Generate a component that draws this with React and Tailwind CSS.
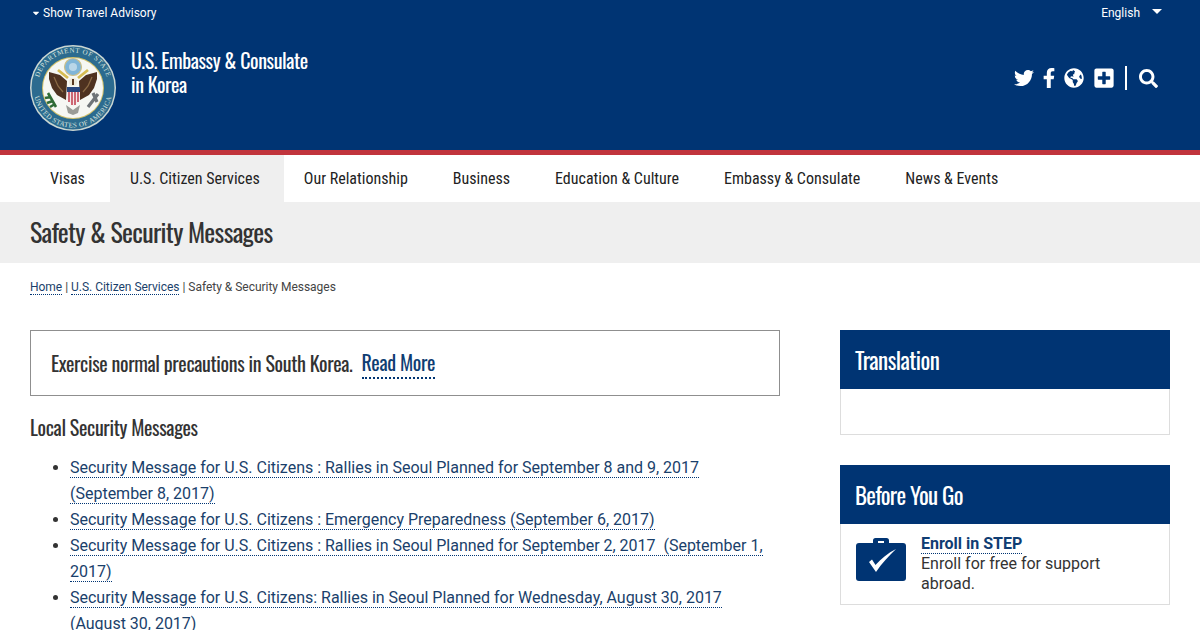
import { FaCaretDown, FaTwitter, FaFacebookF, FaGlobeAmericas, FaPlusSquare, FaSearch } from "react-icons/fa";

const navItems = ["Visas", "U.S. Citizen Services", "Our Relationship", "Business", "Education & Culture", "Embassy & Consulate", "News & Events"];

const messages = [
  "Security Message for U.S. Citizens : Rallies in Seoul Planned for September 8 and 9, 2017 (September 8, 2017)",
  "Security Message for U.S. Citizens : Emergency Preparedness (September 6, 2017)",
  "Security Message for U.S. Citizens : Rallies in Seoul Planned for September 2, 2017\u00a0 (September 1, 2017)",
  "Security Message for U.S. Citizens: Rallies in Seoul Planned for Wednesday, August 30, 2017 (August 30, 2017)",
];

const heading = "font-['Liberation_Sans_Narrow','Oswald',sans-serif]";

function Seal() {
  return (
    <svg width="86" height="86" viewBox="0 0 86 86">
      <defs>
        <path id="sealTop" d="M7.500 43a35.500 35.500 0 0 1 71 0" />
        <path id="sealBottom" d="M3.500 43a39.500 39.500 0 0 0 79 0" />
      </defs>
      <circle cx="43" cy="43" r="43" fill="#c9d6d2" />
      <circle cx="43" cy="43" r="41.500" fill="#2c6b8f" />
      <circle cx="43" cy="43" r="31" fill="#d3c169" />
      <circle cx="43" cy="43" r="30" fill="#f6f7f3" />
      <text fill="#dbe5df" fontSize="7" letterSpacing="0.6" fontFamily="Liberation Serif, serif">
        <textPath href="#sealTop" startOffset="50%" textAnchor="middle">DEPARTMENT OF STATE</textPath>
      </text>
      <text fill="#dbe5df" fontSize="7" letterSpacing="0.4" fontFamily="Liberation Serif, serif">
        <textPath href="#sealBottom" startOffset="50%" textAnchor="middle">UNITED STATES OF AMERICA</textPath>
      </text>
      <circle cx="43" cy="22" r="8.500" fill="#7fb5d8" stroke="#cdbf88" strokeWidth="1.200" />
      <circle cx="43" cy="22" r="4" fill="#b9d6e8" />
      <path d="M37 36 30 30 19 27l0 7 3 9 5 7 9 5ZM49 36l7-6 11-3v7l-3 9-5 7-9 5Z" fill="#4e3220" />
      <path d="M24 32l4 9 5 6M62 32l-4 9-5 6" stroke="#8a6a45" strokeWidth="1.300" fill="none" />
      <path d="M28 25l10 8M58 25 48 33" stroke="#d6bc52" strokeWidth="2.800" />
      <circle cx="43" cy="37" r="4" fill="#efeadb" />
      <path d="M43 34v6" stroke="#5a3a22" strokeWidth="2" />
      <path d="M37 42h13v13l-6.500 6-6.500-6Z" fill="#f3e9e9" />
      <path d="M37 42h13v5H37Z" fill="#28477f" />
      <path d="M39 47v10M42 47v13M45 47v13M48 47v10" stroke="#bd3040" strokeWidth="1.400" />
      <path d="M18 48l8 14M15 53l6-1M17 58l6-2M20 62l5-3" stroke="#2f6b36" strokeWidth="2.600" />
      <path d="M68 49l-10 13M63 48l4 9" stroke="#6f7478" strokeWidth="3.200" />
      <path d="M36 60l7 5 7-5-2 8-5 2-5-2Z" fill="#9a9c97" />
    </svg>
  );
}

function Briefcase() {
  return (
    <svg width="50" height="44" viewBox="0 0 50 44">
      <path d="M17 5V2.500A2.500 2.500 0 0 1 19.500 0h11A2.500 2.500 0 0 1 33 2.500V5h-5V3h-6v2Z" fill="#003473" />
      <rect x="0" y="5" width="50" height="38" rx="3" fill="#003473" />
      <path d="M13 24l3-2.500 3.500 5.500C25 21 32 15 40 11 33 18 26 25 20 34Z" fill="#fff" />
    </svg>
  );
}

function SideCard({ title, tracking, children, bodyClass }) {
  return (
    <div>
      <h2 className={`bg-[#003473] text-white px-[15px] h-[59px] flex items-center text-[23px] pt-[1px] ${tracking} ${heading}`}>{title}</h2>
      <div className={`border border-t-0 border-[#dddddd] bg-white ${bodyClass}`}>{children}</div>
    </div>
  );
}

export default function App() {
  return (
    <div className="h-[630px] overflow-hidden bg-white text-[#333333] font-['Roboto',sans-serif]">
      <header className="bg-[#003473] h-[155px] border-b-[5px] border-[#c1343c] text-white">
        <div className="flex justify-between h-[26px] pl-[31px] pr-[38px] text-[12px] leading-[26px]">
          <div className="flex items-center gap-[2px]">
            <FaCaretDown className="text-[10px]" />
            <span>Show Travel Advisory</span>
          </div>
          <div className="flex items-center gap-[12px]">
            <span>English</span>
            <span className="w-0 h-0 border-x-[5px] border-x-transparent border-t-[5px] border-t-white mb-[4px]"></span>
          </div>
        </div>
        <div className="flex justify-between items-start pl-[30px] pr-[42px] pt-[19px]">
          <div className="flex gap-[15px]">
            <Seal />
            <div className={`pt-[3px] text-[20px] leading-[24px] tracking-[-0.4px] ${heading}`}>
              U.S. Embassy &amp; Consulate
              <br />
              in Korea
            </div>
          </div>
          <div className="flex items-center mt-[21px] h-[24px]">
            <FaTwitter className="text-[20px]" />
            <FaFacebookF className="text-[20px] ml-[5px]" />
            <FaGlobeAmericas className="text-[20px] ml-[5px]" />
            <FaPlusSquare className="text-[22px] ml-[9px]" />
            <span className="w-[2px] h-[24px] bg-white ml-[10px]"></span>
            <FaSearch className="text-[19px] ml-[12px]" />
          </div>
        </div>
      </header>

      <nav className="flex h-[47px] pl-[30px] text-[16px] leading-[47px] text-[#222222] font-['Roboto',sans-serif] [font-stretch:75%]">
        {navItems.map((item, i) => (
          <a key={item} className={`pl-[20px] whitespace-nowrap ${i === 1 ? "pr-[24px] bg-[#efefef]" : "pr-[25px]"}`}>{item}</a>
        ))}
      </nav>

      <div className="bg-[#efefef] h-[61px] pl-[30px] flex items-center">
        <h1 className={`text-[26px] tracking-[-0.7px] text-[#333333] pb-[2px] ${heading}`}>Safety &amp; Security Messages</h1>
      </div>

      <div className="pl-[30px] pt-[16px] text-[12px] leading-[16px] text-[#444444] tracking-[-0.02px]">
        <a className="text-[#1a3f6b] border-b border-dotted border-[#003473]">Home</a>
        {" | "}
        <a className="text-[#1a3f6b] border-b border-dotted border-[#003473]">U.S. Citizen Services</a>
        {" | Safety & Security Messages"}
      </div>

      <div className="flex pl-[30px] pr-[30px] pt-[35px] justify-between">
        <main className="w-[750px]">
          <div className={`border border-[#8f8f8f] h-[66px] flex items-center pl-[20px] text-[20px] tracking-[-0.35px] pb-[1px] ${heading}`}>
            <span>Exercise normal precautions in South Korea.</span>
            <a className="ml-[9px] text-[#0f3d73] border-b-2 border-dotted border-[#003473]">Read More</a>
          </div>
          <h3 className={`mt-[18px] text-[20px] leading-[26px] tracking-[-0.35px] ${heading}`}>Local Security Messages</h3>
          <ul className="list-disc pl-[40px] mt-[15px] text-[16px] leading-[26px] text-[#1a3f6b] tracking-[-0.01px]">
            {messages.map((m) => (
              <li key={m} className="marker:text-[#333333]">
                <a className="border-b border-dotted border-[#003473]">{m}</a>
              </li>
            ))}
          </ul>
        </main>

        <aside className="w-[330px] flex flex-col gap-[30px]">
          <SideCard title="Translation" tracking="tracking-[-0.55px]" bodyClass="h-[46px]" />
          <SideCard title="Before You Go" tracking="tracking-[-0.7px]" bodyClass="h-[81px] flex pl-[15px] pt-[10px] gap-[15px]">
            <div className="pt-[4px]"><Briefcase /></div>
            <div className="text-[16px] leading-[20px] w-[200px]">
              <a className="font-bold text-[#0f3d73] border-b border-dotted border-[#003473]">Enroll in STEP</a>
              <p>Enroll for free for support abroad.</p>
            </div>
          </SideCard>
        </aside>
      </div>
    </div>
  );
}
